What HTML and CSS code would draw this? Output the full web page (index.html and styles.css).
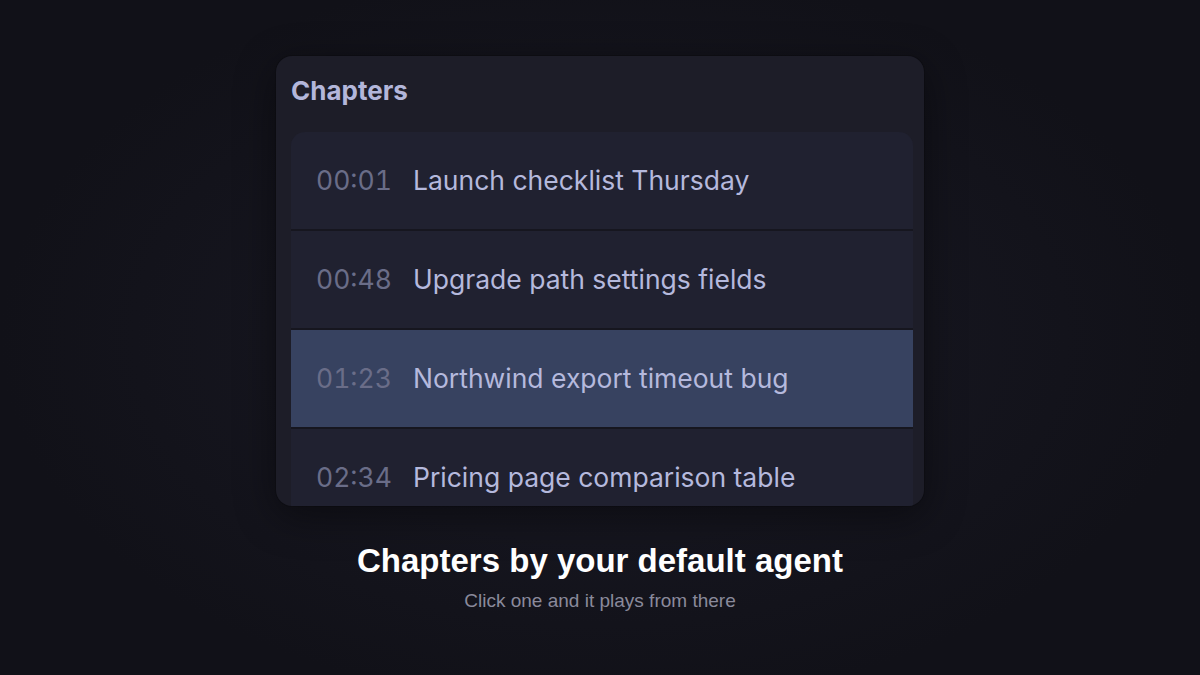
FILE: index.html
```html
<!DOCTYPE html>
<html>
<head>
<meta charset="utf-8">
<link rel="stylesheet" href="styles.css">
</head>
<body>
<main class="stage">
  <section class="card">
    <h2 class="card-title">Chapters</h2>
    <ul class="chapters">
      <li class="chapter"><span class="time">00:01</span><span class="name">Launch checklist Thursday</span></li>
      <li class="chapter"><span class="time">00:48</span><span class="name">Upgrade path settings fields</span></li>
      <li class="chapter active"><span class="time">01:23</span><span class="name">Northwind export timeout bug</span></li>
      <li class="chapter"><span class="time">02:34</span><span class="name">Pricing page comparison table</span></li>
    </ul>
  </section>
  <h1 class="headline">Chapters by your default agent</h1>
  <p class="sub">Click one and it plays from there</p>
</main>
</body>
</html>
```
FILE: styles.css
```css
html, body {
  margin: 0;
  padding: 0;
  height: 100%;
}
body {
  background: radial-gradient(ellipse 50% 55% at 50% 50%, #181822 0%, #15151e 55%, #111118 100%);
  font-family: Inter, "Noto Sans", sans-serif;
  overflow: hidden;
}
.stage {
  display: flex;
  flex-direction: column;
  align-items: center;
  padding-top: 56px;
}
.card {
  width: 648px;
  height: 450px;
  box-sizing: border-box;
  padding: 19px 11px 0 15px;
  background: #1d1d28;
  border-radius: 16px;
  overflow: hidden;
  box-shadow: 0 10px 40px rgba(0, 0, 0, 0.45), 0 0 0 1px rgba(0,0,0,0.15);
  display: flex;
  flex-direction: column;
}
.card-title {
  margin: 0;
  font-size: 26px;
  line-height: 32px;
  font-weight: 700;
  color: #b3b6da;
}
.chapters {
  list-style: none;
  margin: 25px 0 0 0;
  padding: 0;
  background: #202130;
  border-radius: 14px 14px 0 0;
  flex: 1;
  overflow: hidden;
}
.chapter {
  box-sizing: border-box;
  height: 99px;
  display: flex;
  align-items: center;
  padding: 0 0 2px 25px;
  border-bottom: 2px solid #16161f;
  font-size: 26.5px;
}
.chapter.active {
  background: #374260;
}
.time {
  width: 97px;
  flex: none;
  color: #6a6d88;
  font-variant-numeric: tabular-nums;
}
.name {
  color: #b5b9dd;
}
.headline {
  margin: 35px 0 0 0;
  font-family: "Liberation Sans", Arial, sans-serif;
  font-weight: 700;
  font-size: 33px;
  line-height: 40px;
  color: #ffffff;
}
.sub {
  margin: 8px 0 0 0;
  font-family: "Liberation Sans", Arial, sans-serif;
  font-size: 19px;
  line-height: 24px;
  color: #8a8a9b;
}
```
